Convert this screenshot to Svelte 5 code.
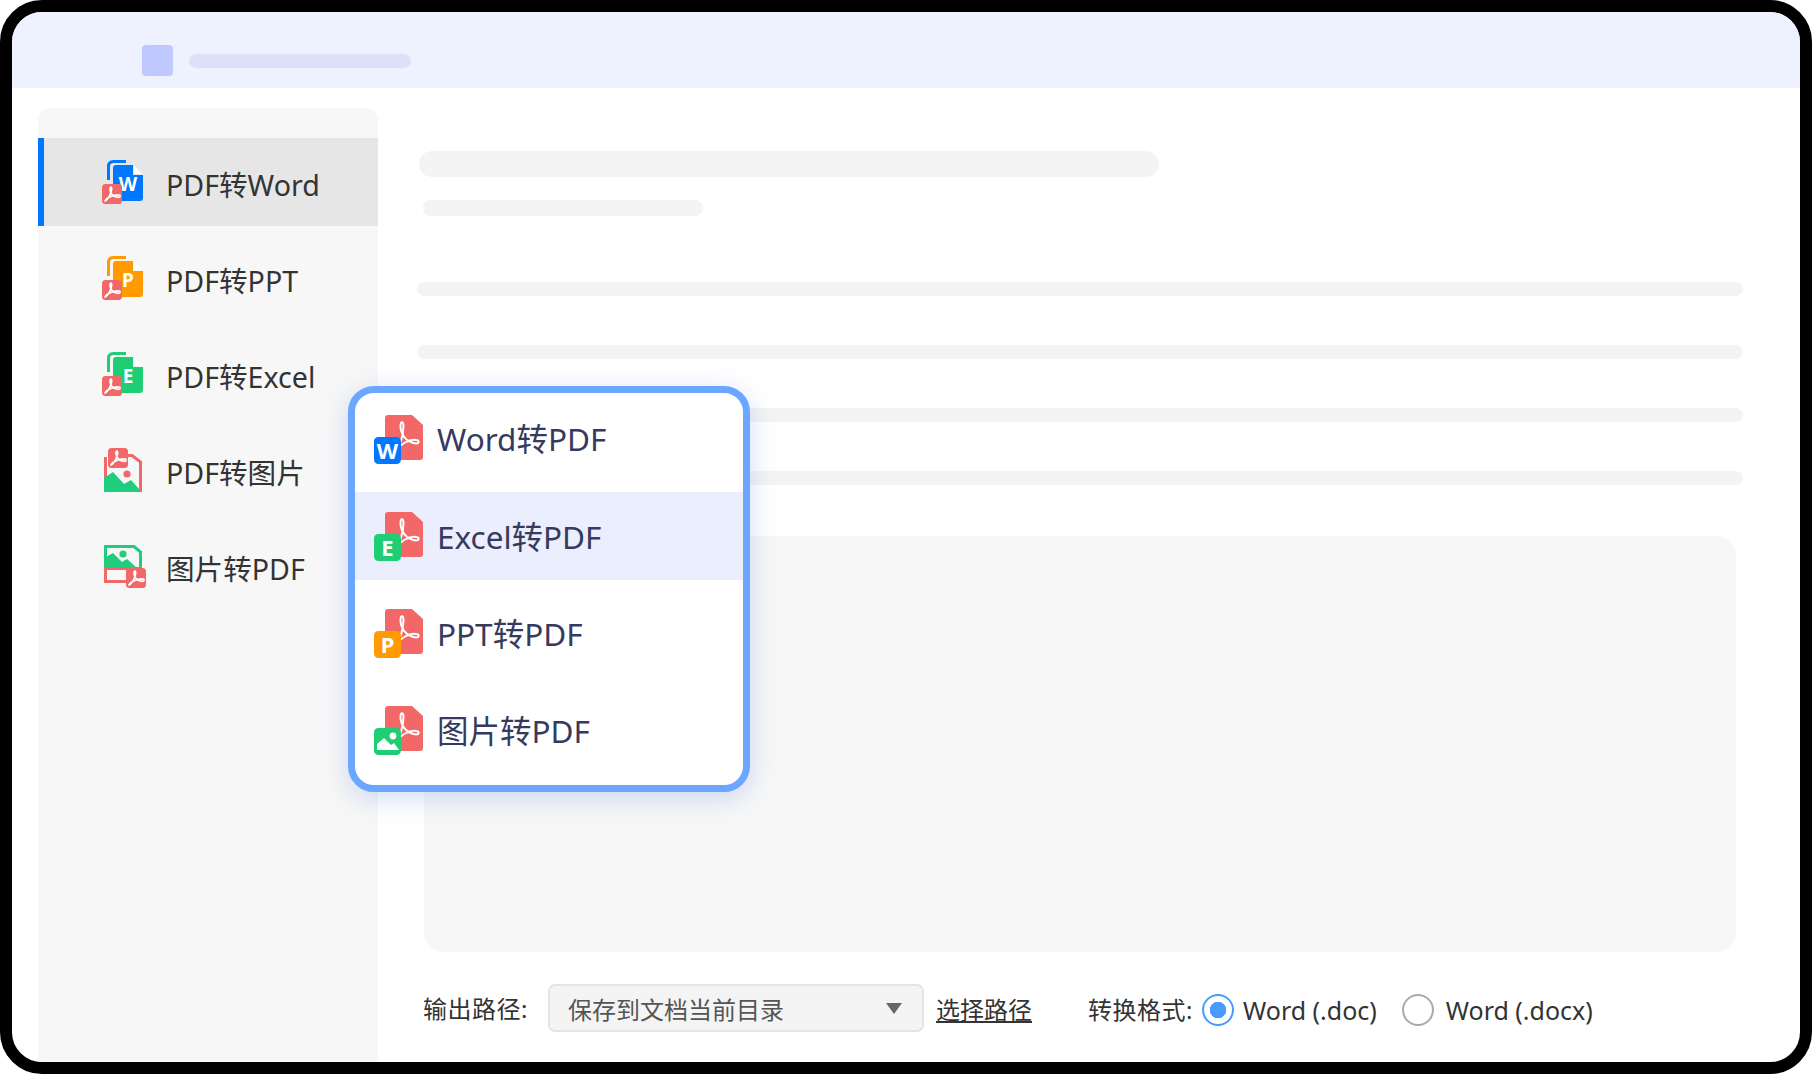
<script>
  const sideItems = [
    { label: 'PDF转Word', kind: 'doc', color: '#0077ff', letter: 'W' },
    { label: 'PDF转PPT', kind: 'doc', color: '#ff9a00', letter: 'P' },
    { label: 'PDF转Excel', kind: 'doc', color: '#1fcd75', letter: 'E' },
    { label: 'PDF转图片', kind: 'toImage' },
    { label: '图片转PDF', kind: 'fromImage' }
  ];
  const popItems = [
    { label: 'Word转PDF', color: '#0077ff', letter: 'W' },
    { label: 'Excel转PDF', color: '#1fcd75', letter: 'E' },
    { label: 'PPT转PDF', color: '#ff9a00', letter: 'P' },
    { label: '图片转PDF', color: '#1fcd75', letter: '' }
  ];
  const lines = [0, 1, 2, 3];
  const red = '#f26767';
  const green = '#1fcd7c';
</script>

{#snippet acrobat(x, y)}
  <g transform="translate({x} {y})">
    <path d="M3 17 C6.5 15 9 9.5 9.6 5.5 C10 2.5 7.8 2.5 8 5.5 C8.4 9.5 11.5 13 16.5 13.4 C18.6 13.4 18.6 11 16.5 11 C11.5 10.8 5.5 13 3 17z" fill="none" stroke="#fff" stroke-width="1.8" stroke-linejoin="round"/>
  </g>
{/snippet}

{#snippet pdfTile(x, y)}
  <rect x={x} y={y} width="20" height="20" rx="3.5" fill={red}/>
  {@render acrobat(x, y)}
{/snippet}

{#snippet docIcon(color, letter)}
  <svg class="ic" width="41" height="44" viewBox="0 0 41 44">
    <path d="M6.5 20 V6.5 Q6.5 1.5 11.5 1.5 H24" fill="none" stroke={color} stroke-width="3"/>
    <path d="M14 5 H31 V15 H41 V38 Q41 41 38 41 H14 Q11 41 11 38 V8 Q11 5 14 5z" fill={color}/>
    <path d="M32 5.5 L40.5 14 H32z" fill="#fff"/>
    <text x="26" y="31" text-anchor="middle" class="glyph">{letter}</text>
    {@render pdfTile(0, 24)}
  </svg>
{/snippet}

{#snippet toImageIcon()}
  <svg class="ic" width="41" height="46" viewBox="0 0 41 46">
    <path d="M3.5 45 V10 M22 8.5 H30 L38.5 15 V45" fill="none" stroke={red} stroke-width="3"/>
    <circle cx="25" cy="27" r="3.6" fill={red}/>
    <path d="M2 45 V31 L11 25 L22 37 L29 33 L37 42 V45z" fill={green}/>
    {@render pdfTile(6, 1)}
  </svg>
{/snippet}

{#snippet fromImageIcon()}
  <svg class="ic" width="46" height="46" viewBox="0 0 46 46">
    <path d="M3.5 25 V3.5 H32 L38.5 9 V26" fill="none" stroke={green} stroke-width="3"/>
    <path d="M3.5 25 V38.5 H26" fill="none" stroke={red} stroke-width="3"/>
    <rect x="2" y="24" width="36" height="3" fill={red}/>
    <path d="M2 25 V15 L11 10 L20 19 L25 16 L35 25z" fill={green}/>
    <circle cx="21" cy="11" r="3.6" fill={green}/>
    {@render pdfTile(24, 25)}
  </svg>
{/snippet}

{#snippet popIcon(color, letter)}
  <svg class="ic" width="49" height="49" viewBox="0 0 49 49">
    <path d="M14 0 H38 L49 10 V42 Q49 45 46 45 H14 Q11 45 11 42 V3 Q11 0 14 0z" fill={red}/>
    <path d="M20 38 C25 33 29.5 22 29.5 11 C29.5 6 26.5 6 26.5 11 C26.5 18 31 27 42 28.5 C45.5 28.5 45.5 25 42 25 C35 24 26 29 20 38z" fill="none" stroke="#fff" stroke-width="2" stroke-linejoin="round"/>
    <rect x="0" y="22" width="27" height="27" rx="4.5" fill={color}/>
    {#if letter}
      <text x="13.5" y="43.5" text-anchor="middle" class="glyph big">{letter}</text>
    {:else}
      <circle cx="19" cy="30" r="3.4" fill="#fff"/>
      <path d="M3 44 V38 L10 32 L17 39 L20 37 L25 44z" fill="#fff"/>
    {/if}
  </svg>
{/snippet}

<div class="frame">
  <header class="topbar">
    <span class="logo"></span>
    <span class="title"></span>
  </header>

  <div class="body">
    <nav class="sidebar">
      {#each sideItems as item, i}
        <div class="side-item" class:active={i === 0}>
          <span class="ic-box">
            {#if item.kind === 'doc'}
              {@render docIcon(item.color, item.letter)}
            {:else if item.kind === 'toImage'}
              {@render toImageIcon()}
            {:else}
              {@render fromImageIcon()}
            {/if}
          </span>
          <span class="side-label">{item.label}</span>
        </div>
      {/each}
    </nav>

    <main class="main">
      <div class="sk sk-title"></div>
      <div class="sk sk-sub"></div>
      <div class="sk-lines">
        {#each lines as l}
          <div class="sk sk-line"></div>
        {/each}
      </div>
      <div class="panel"></div>
      <div class="options">
        <span class="opt-label">输出路径:</span>
        <div class="select">
          <span>保存到文档当前目录</span>
          <i class="caret"></i>
        </div>
        <a class="link" href="#path">选择路径</a>
        <span class="opt-label fmt">转换格式:</span>
        <span class="radio on"></span>
        <span class="radio-text">Word (.doc)</span>
        <span class="radio second"></span>
        <span class="radio-text wide">Word (.docx)</span>
      </div>
    </main>
  </div>

  <div class="popup">
    {#each popItems as item, i}
      <div class="pop-item" class:hover={i === 1}>
        {@render popIcon(item.color, item.letter)}
        <span class="pop-label">{item.label}</span>
      </div>
    {/each}
  </div>
</div>

<style>
  :global(body) {
    margin: 0;
    background: #fff;
  }

  .frame {
    position: relative;
    box-sizing: border-box;
    width: 1812px;
    height: 1074px;
    border: 12px solid #000;
    border-radius: 42px;
    background: #fff;
    overflow: hidden;
    display: flex;
    flex-direction: column;
    font-family: "Noto Sans", "Noto Sans CJK SC", sans-serif;
  }

  .topbar {
    flex: none;
    box-sizing: border-box;
    height: 76px;
    background: #eef2fe;
    display: flex;
    align-items: center;
    gap: 16px;
    padding: 21px 0 0 130px;
  }
  .logo {
    width: 31px;
    height: 31px;
    border-radius: 4px;
    background: #bfc9ff;
  }
  .title {
    width: 222px;
    height: 14px;
    border-radius: 7px;
    background: #dde0f9;
  }

  .body {
    flex: 1;
    min-height: 0;
    display: flex;
    padding: 20px 0 0 26px;
  }

  .sidebar {
    flex: none;
    width: 340px;
    box-sizing: border-box;
    padding-top: 30px;
    background: #f7f7f7;
    border-radius: 12px 12px 0 0;
    display: flex;
    flex-direction: column;
    gap: 8px;
  }
  .side-item {
    height: 88px;
    box-sizing: border-box;
    padding-left: 64px;
    display: flex;
    align-items: center;
    font-size: 28.6px;
    color: #333;
  }
  .side-item.active {
    background: #e6e6e6;
    border-left: 6px solid #0077ff;
    padding-left: 58px;
  }
  .side-label {
    margin-top: 3px;
  }
  .ic-box {
    width: 64px;
    display: flex;
  }
  .ic {
    display: block;
    flex: none;
  }
  .glyph {
    font: 700 19px "Noto Sans", sans-serif;
    fill: #fff;
  }
  .glyph.big {
    font-size: 22px;
  }

  .main {
    flex: 1;
    min-width: 0;
    display: flex;
    flex-direction: column;
  }
  .sk {
    background: #f4f4f4;
  }
  .sk-title {
    margin: 43px 0 0 41px;
    width: 740px;
    height: 26px;
    border-radius: 13px;
  }
  .sk-sub {
    margin: 23px 0 0 45px;
    width: 280px;
    height: 16px;
    border-radius: 8px;
  }
  .sk-lines {
    margin: 66px 0 0 39px;
    display: flex;
    flex-direction: column;
    gap: 49px;
  }
  .sk-line {
    width: 1326px;
    height: 14px;
    border-radius: 7px;
  }
  .panel {
    margin: 51px 0 0 46px;
    width: 1312px;
    height: 416px;
    border-radius: 20px;
    background: #f7f7f7;
  }

  .options {
    margin: 32px 0 0 45px;
    height: 48px;
    display: flex;
    align-items: center;
    font-size: 24px;
    color: #333;
  }
  .opt-label {
    width: 125px;
    flex: none;
    letter-spacing: 0.5px;
    margin-bottom: 2px;
  }
  .select {
    flex: none;
    box-sizing: border-box;
    width: 376px;
    height: 48px;
    padding: 0 20px 0 18px;
    border: 2px solid #e5e5e5;
    border-radius: 7px;
    background: #f4f4f4;
    color: #555;
    display: flex;
    align-items: center;
    justify-content: space-between;
  }
  .caret {
    width: 0;
    height: 0;
    border-left: 8px solid transparent;
    border-right: 8px solid transparent;
    border-top: 11px solid #666;
  }
  .link {
    margin-left: 12px;
    color: #333;
    text-decoration: underline;
  }
  .fmt {
    margin: 0 0 0 56px;
    width: 114px;
  }
  .radio {
    flex: none;
    box-sizing: border-box;
    width: 32px;
    height: 32px;
    margin-top: 4px;
    border-radius: 50%;
    border: 2px solid #aaa;
    background: #fff;
  }
  .radio.on {
    border-color: #4a9bff;
    background: radial-gradient(circle, #4a9bff 0 8px, #fff 8.5px);
  }
  .radio.second {
    margin-left: 25px;
  }
  .radio-text {
    margin: 3px 0 0 9px;
    font-size: 25px;
  }
  .radio-text.wide {
    margin-left: 12px;
  }

  .popup {
    position: absolute;
    left: 336px;
    top: 374px;
    box-sizing: border-box;
    width: 402px;
    height: 406px;
    border: 7px solid #6ba6ff;
    border-radius: 26px;
    background: #fff;
    box-shadow: 0 6px 26px rgba(70, 120, 220, 0.25);
    padding-top: 2px;
    display: flex;
    flex-direction: column;
    gap: 9px;
    overflow: hidden;
  }
  .pop-item {
    flex: none;
    height: 88px;
    display: flex;
    align-items: center;
    gap: 14px;
    padding-left: 19px;
    font-size: 31.5px;
    color: #363b5e;
  }
  .pop-item.hover {
    background: #ebeefd;
  }
  .pop-label {
    margin-bottom: 2px;
  }
  .pop-item:first-child .pop-label {
    margin-bottom: 5px;
  }
</style>
